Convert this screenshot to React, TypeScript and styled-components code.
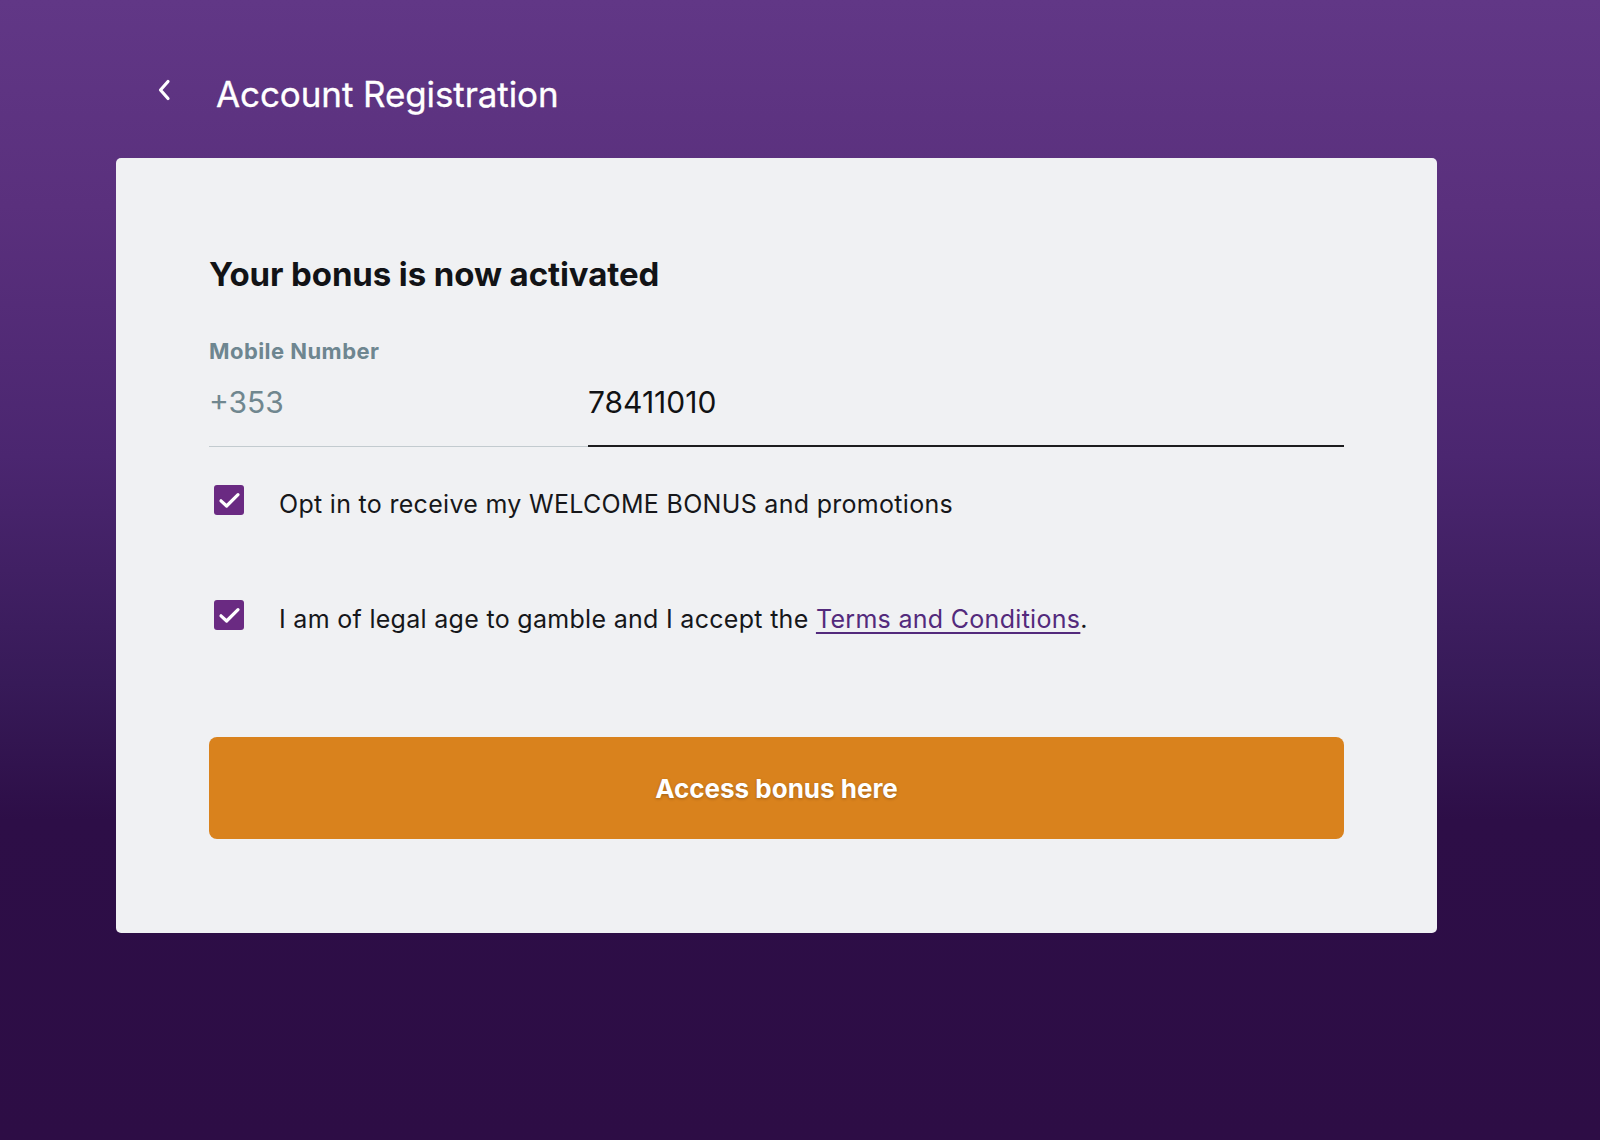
import React, { useState } from "react";
import styled, { createGlobalStyle } from "styled-components";

const GlobalStyle = createGlobalStyle`
  html, body {
    margin: 0;
    padding: 0;
  }
  body {
    min-height: 1140px;
    font-family: Inter, "Noto Sans", "Liberation Sans", sans-serif;
    background: linear-gradient(
        180deg,
        #613786 0%,
        #5a307d 18%,
        #4b2670 40%,
        #371a58 60%,
        #2d0e47 72%,
        #2d0d45 100%
      )
      no-repeat;
    background-color: #2d0d45;
    -webkit-font-smoothing: antialiased;
  }
`;

const Page = styled.div`
  min-height: 1140px;
  padding-left: 116px;
  box-sizing: border-box;
`;

const Header = styled.header`
  display: flex;
  align-items: center;
  height: 46px;
  padding-top: 71px;
  margin-bottom: 41px;
  .back {
    display: flex;
    align-items: center;
    justify-content: center;
    width: 20px;
    height: 22px;
    margin-left: 38px;
    margin-right: 42px;
    margin-top: -9px;
    background: none;
    border: none;
    padding: 0;
    cursor: pointer;
  }
`;

const Title = styled.h1`
  margin: 0;
  color: #ffffff;
  font-size: 35px;
  font-weight: 400;
  line-height: 46px;
  letter-spacing: -0.1px;
  -webkit-text-stroke: 0.3px #ffffff;
`;

const Card = styled.section`
  width: 1321px;
  box-sizing: border-box;
  background: #f0f1f3;
  border-radius: 5px;
  padding: 96px 93px 94px;
`;

const Heading = styled.h2`
  margin: 0 0 45px;
  color: #121316;
  font-size: 33px;
  font-weight: 700;
  line-height: 40px;
  letter-spacing: -0.1px;
`;

const FieldLabel = styled.label`
  display: block;
  color: #6e8690;
  font-size: 22px;
  font-weight: 700;
  line-height: 24px;
  letter-spacing: 0.45px;
  margin-bottom: 22px;
`;

const PhoneRow = styled.div`
  display: flex;
  align-items: flex-end;
`;

const Field = styled.div<{ $active?: boolean; $width: number }>`
  width: ${(p) => p.$width}px;
  padding-bottom: ${(p) => (p.$active ? 26 : 27)}px;
  border-bottom: ${(p) => (p.$active ? "2px solid #1c1c1e" : "1px solid #c3cbcf")};
  font-size: 30px;
  line-height: 34px;
  color: ${(p) => (p.$active ? "#111214" : "#70878f")};
  input {
    display: block;
    width: 100%;
    border: none;
    outline: none;
    background: transparent;
    padding: 0;
    font: inherit;
    color: inherit;
  }
`;

const Options = styled.div`
  display: flex;
  flex-direction: column;
  gap: 78px;
  margin-top: 38px;
`;

const CheckRow = styled.label`
  display: flex;
  align-items: flex-start;
  cursor: pointer;
  .text {
    padding-top: 1px;
    font-size: 25px;
    line-height: 36px;
    letter-spacing: 0.3px;
    color: #16171a;
  }
  a {
    color: #532a7c;
    text-decoration: underline;
    text-underline-offset: 4px;
    text-decoration-thickness: 1.5px;
  }
`;

const Box = styled.span<{ $checked: boolean }>`
  flex: none;
  width: 30px;
  height: 30px;
  margin-left: 5px;
  margin-right: 35px;
  border-radius: 3px;
  box-sizing: border-box;
  display: flex;
  align-items: center;
  justify-content: center;
  background: ${(p) => (p.$checked ? "#6a2a82" : "#ffffff")};
  border: ${(p) => (p.$checked ? "none" : "2px solid #6a2a82")};
`;

const SubmitButton = styled.button`
  display: block;
  width: 100%;
  height: 102px;
  margin-top: 100px;
  border: none;
  border-radius: 8px;
  background: #d9821d;
  color: #ffffff;
  font-family: inherit;
  font-size: 26px;
  font-weight: 700;
  text-shadow: 0 1px 3px rgba(0, 0, 0, 0.25);
  cursor: pointer;
`;

const Checkbox: React.FC<{ checked: boolean }> = ({ checked }) => (
  <Box $checked={checked}>
    {checked && (
      <svg width="23" height="19" viewBox="0 0 23 19" fill="none">
        <path
          d="M3 9.8 L8.6 15 L20 3.6"
          stroke="#ffffff"
          strokeWidth="3.2"
          strokeLinecap="round"
          strokeLinejoin="round"
        />
      </svg>
    )}
  </Box>
);

export default function App() {
  const [promo, setPromo] = useState(true);
  const [terms, setTerms] = useState(true);
  const [phone, setPhone] = useState("78411010");

  return (
    <>
      <GlobalStyle />
      <Page>
        <Header>
          <button className="back" aria-label="Back">
            <svg width="14" height="22" viewBox="0 0 14 22" fill="none">
              <path
                d="M11 2.5 L3.5 11 L11 19.5"
                stroke="#ffffff"
                strokeWidth="3.2"
                strokeLinecap="round"
                strokeLinejoin="round"
              />
            </svg>
          </button>
          <Title>Account Registration</Title>
        </Header>

        <Card>
          <Heading>Your bonus is now activated</Heading>
          <FieldLabel htmlFor="mobile">Mobile Number</FieldLabel>
          <PhoneRow>
            <Field $width={379}>+353</Field>
            <Field $width={756} $active>
              <input
                id="mobile"
                value={phone}
                onChange={(e) => setPhone(e.target.value)}
              />
            </Field>
          </PhoneRow>

          <Options>
            <CheckRow onClick={() => setPromo(!promo)}>
              <Checkbox checked={promo} />
              <span className="text">
                Opt in to receive my WELCOME BONUS and promotions
              </span>
            </CheckRow>
            <CheckRow onClick={() => setTerms(!terms)}>
              <Checkbox checked={terms} />
              <span className="text">
                I am of legal age to gamble and I accept the{" "}
                <a href="#terms" onClick={(e) => e.preventDefault()}>
                  Terms and Conditions
                </a>
                .
              </span>
            </CheckRow>
          </Options>

          <SubmitButton>Access bonus here</SubmitButton>
        </Card>
      </Page>
    </>
  );
}
